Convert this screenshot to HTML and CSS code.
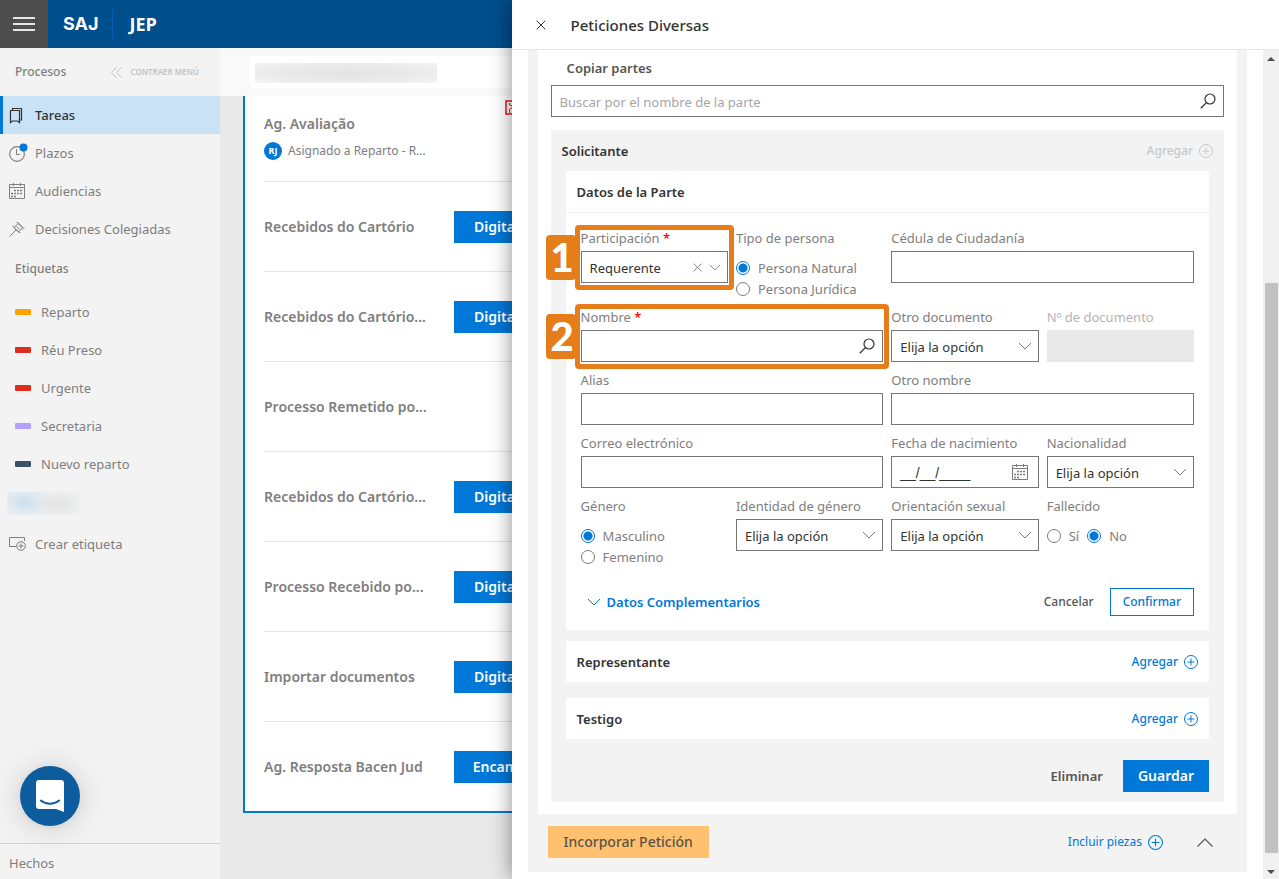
FILE: index.html
```html
<!DOCTYPE html>
<html lang="es">
<head>
<meta charset="utf-8">
<title>Peticiones Diversas</title>
<link rel="stylesheet" href="styles.css">
</head>
<body>
<svg class="sprite" aria-hidden="true">
  <symbol id="i-search" viewBox="0 0 16 16"><circle cx="10" cy="6" r="5" fill="none" stroke="currentColor" stroke-width="1.2"/><path d="M6.4 9.6L.8 15.2" fill="none" stroke="currentColor" stroke-width="1.3"/></symbol>
  <symbol id="i-plus" viewBox="0 0 14 14"><circle cx="7" cy="7" r="6.5" fill="none" stroke="currentColor"/><path d="M7 3.5v7M3.5 7h7" fill="none" stroke="currentColor"/></symbol>
  <symbol id="i-down" viewBox="0 0 14 8"><path d="M1 1l6 6 6-6" fill="none" stroke="currentColor"/></symbol>
  <symbol id="i-x" viewBox="0 0 10 10"><path d="M.7.7l8.6 8.6M9.3.7L.7 9.3" fill="none" stroke="currentColor"/></symbol>
  <symbol id="i-cal" viewBox="0 0 16 16"><path d="M.5 1.500h15v14H.5zM.5 4.500h15M4.500 0v3M11.500 0v3" fill="none" stroke="currentColor"/><path d="M5 7.500h9M2 10.500h12M2 13.500h6" fill="none" stroke="currentColor" stroke-width="1.500" stroke-dasharray="2 1"/></symbol>
</svg>
<div class="app">
  <header class="topbar">
    <button class="burger" type="button" aria-label="Menú"><span></span><span></span><span></span></button>
    <span class="brand">SAJ</span>
    <span class="org">JEP</span>
  </header>
  <nav class="sidebar">
    <div class="side-head">
      <span class="side-title">Procesos</span>
      <button class="collapse" type="button"><svg width="11" height="11" viewBox="0 0 11 11"><path d="M5.500.5l-5 5 5 5M10.500.5l-5 5 5 5" fill="none" stroke="currentColor"/></svg>CONTRAER MENÚ</button>
    </div>
    <a class="nav active" href="#"><svg width="17" height="17" viewBox="0 0 17 17"><path d="M1.500 3.500h9v12l-2-1.500h-5l-2 1.500zM3.500 3V1.500h9V13H11" fill="none" stroke="currentColor" stroke-width="1.200"/></svg>Tareas</a>
    <a class="nav" href="#"><svg width="20" height="20" viewBox="0 0 20 20"><circle cx="8" cy="11" r="7.400" fill="none" stroke="currentColor" stroke-width="1.100"/><path d="M7.500 6v5.500H11" fill="none" stroke="currentColor"/><circle cx="14.500" cy="4.500" r="4" fill="#0078d7"/></svg>Plazos</a>
    <a class="nav" href="#"><svg width="16" height="16"><use href="#i-cal"/></svg>Audiencias</a>
    <a class="nav" href="#"><svg width="16" height="16" viewBox="0 0 16 16"><path d="M.5 15.500L7 9M5 6.500l4-4 4.500 4.500-4 4zM4 5.500l6.500 6.500M8.500 1l6.500 6.500M4 5.500l1-1M8.500 1l-1 1M10.500 12l1-1M15 7.500l-1 1M7.500 5.500l3 3" fill="none" stroke="currentColor"/></svg>Decisiones Colegiadas</a>
    <div class="side-sub">Etiquetas</div>
    <a class="nav tag" href="#"><i class="sw orange"></i>Reparto</a>
    <a class="nav tag" href="#"><i class="sw red"></i>Réu Preso</a>
    <a class="nav tag" href="#"><i class="sw red"></i>Urgente</a>
    <a class="nav tag" href="#"><i class="sw lilac"></i>Secretaria</a>
    <a class="nav tag" href="#"><i class="sw slate"></i>Nuevo reparto</a>
    <div class="smudge-tag"></div>
    <a class="nav create" href="#"><svg width="17" height="14" viewBox="0 0 17 14"><path d="M7 9.500H.5V.5h15V4" fill="none" stroke="currentColor"/><circle cx="12" cy="9" r="4.300" fill="none" stroke="currentColor"/><path d="M12 6.500v5M9.500 9h5" fill="none" stroke="currentColor"/></svg>Crear etiqueta</a>
    <div class="side-foot">Hechos</div>
    <button class="chat" type="button" aria-label="Chat"><svg width="28" height="32" viewBox="0 0 28 32"><path d="M3 0h22a3 3 0 0 1 3 3v29l-8-3H3a3 3 0 0 1-3-3V3a3 3 0 0 1 3-3z" fill="#fff"/><path d="M4.800 20.500c5.500 4.300 12.900 4.300 18.400 0" fill="none" stroke="#0d5c9e" stroke-width="1.800" stroke-linecap="round"/></svg></button>
  </nav>
  <main class="board">
    <div class="filter"><div class="filter-box"><span class="smudge"></span></div></div>
    <div class="list">
      <article class="item first">
        <div><h3>Ag. Avaliação</h3><p class="assigned"><span class="avatar">RJ</span>Asignado a Reparto - R...</p></div>
        <svg class="flag" width="14" height="15" viewBox="0 0 14 15"><rect x="1" y="1" width="12" height="13" fill="#fff" stroke="#e11" stroke-width="1.500"/><path d="M5 13c-2-5 2-6 4-4M4.500 3v2l3 1" fill="none" stroke="#e11"/></svg>
      </article>
      <article class="item"><h3>Recebidos do Cartório</h3><button class="task" type="button">Digitalizar</button></article>
      <article class="item"><h3>Recebidos do Cartório...</h3><button class="task" type="button">Digitalizar</button></article>
      <article class="item"><h3>Processo Remetido po...</h3></article>
      <article class="item"><h3>Recebidos do Cartório...</h3><button class="task" type="button">Digitalizar</button></article>
      <article class="item"><h3>Processo Recebido po...</h3><button class="task" type="button">Digitalizar</button></article>
      <article class="item"><h3>Importar documentos</h3><button class="task" type="button">Digitalizar</button></article>
      <article class="item"><h3>Ag. Resposta Bacen Jud</h3><button class="task" type="button">Encaminar</button></article>
    </div>
  </main>
  <section class="drawer">
    <header class="drawer-head">
      <button class="plain" type="button" aria-label="Cerrar"><svg width="10" height="10"><use href="#i-x"/></svg></button>
      <h1>Peticiones Diversas</h1>
    </header>
    <div class="drawer-body">
      <div class="petition">
        <div class="parts">
          <label class="copy-label" for="buscar">Copiar partes</label>
          <div class="control"><input class="box" id="buscar" type="text" placeholder="Buscar por el nombre de la parte"><svg class="in-icon dark" width="16" height="16"><use href="#i-search"/></svg></div>
          <div class="group">
            <div class="group-head"><h2>Solicitante</h2><button class="add" type="button" disabled>Agregar<svg width="14" height="14"><use href="#i-plus"/></svg></button></div>
            <div class="card">
              <div class="card-head line"><h2>Datos de la Parte</h2></div>
              <form class="fields">
                <div class="field mark one">
                  <b class="badge">1</b>
                  <label for="part">Participación <em>*</em></label>
                  <div class="control"><select class="box" id="part"><option>Requerente</option></select><svg class="in-icon clear" width="9" height="9" viewBox="0 0 10 10"><use href="#i-x"/></svg><svg class="in-icon" width="12" height="7" viewBox="0 0 14 8"><use href="#i-down"/></svg></div>
                </div>
                <div class="field" role="radiogroup" aria-label="Tipo de persona">
                  <span class="label">Tipo de persona</span>
                  <div class="radios"><label><input type="radio" name="tipo" checked>Persona Natural</label><label><input type="radio" name="tipo">Persona Jurídica</label></div>
                </div>
                <div class="field wide"><label for="cedula">Cédula de Ciudadanía</label><input class="box" id="cedula" type="text"></div>
                <div class="field wide mark two">
                  <b class="badge">2</b>
                  <label for="nombre">Nombre <em>*</em></label>
                  <div class="control"><input class="box" id="nombre" type="text"><svg class="in-icon dark" width="16" height="16"><use href="#i-search"/></svg></div>
                </div>
                <div class="field"><label for="otrodoc">Otro documento</label><div class="control"><select class="box" id="otrodoc"><option>Elija la opción</option></select><svg class="in-icon" width="14" height="8"><use href="#i-down"/></svg></div></div>
                <div class="field off"><label for="numdoc">Nº de documento</label><input class="box" id="numdoc" type="text" disabled></div>
                <div class="field wide"><label for="alias">Alias</label><input class="box" id="alias" type="text"></div>
                <div class="field wide"><label for="otronom">Otro nombre</label><input class="box" id="otronom" type="text"></div>
                <div class="field wide"><label for="correo">Correo electrónico</label><input class="box" id="correo" type="text"></div>
                <div class="field"><label for="fecha">Fecha de nacimiento</label><div class="control"><input class="box date" id="fecha" type="text" value="__/__/____"><svg class="in-icon cal" width="16" height="16"><use href="#i-cal"/></svg></div></div>
                <div class="field"><label for="nac">Nacionalidad</label><div class="control"><select class="box" id="nac"><option>Elija la opción</option></select><svg class="in-icon" width="14" height="8"><use href="#i-down"/></svg></div></div>
                <div class="field" role="radiogroup" aria-label="Género">
                  <span class="label">Género</span>
                  <div class="radios"><label><input type="radio" name="genero" checked>Masculino</label><label><input type="radio" name="genero">Femenino</label></div>
                </div>
                <div class="field"><label for="ident">Identidad de género</label><div class="control"><select class="box" id="ident"><option>Elija la opción</option></select><svg class="in-icon" width="14" height="8"><use href="#i-down"/></svg></div></div>
                <div class="field"><label for="orient">Orientación sexual</label><div class="control"><select class="box" id="orient"><option>Elija la opción</option></select><svg class="in-icon" width="14" height="8"><use href="#i-down"/></svg></div></div>
                <div class="field" role="radiogroup" aria-label="Fallecido">
                  <span class="label">Fallecido</span>
                  <div class="radios row"><label><input type="radio" name="fallecido">Sí</label><label><input type="radio" name="fallecido" checked>No</label></div>
                </div>
              </form>
              <div class="card-actions">
                <button class="more" type="button"><svg width="14" height="8"><use href="#i-down"/></svg>Datos Complementarios</button>
                <button class="cancel" type="button">Cancelar</button>
                <button class="confirm" type="button">Confirmar</button>
              </div>
            </div>
            <div class="card"><div class="card-head"><h2>Representante</h2><button class="add" type="button">Agregar<svg width="14" height="14"><use href="#i-plus"/></svg></button></div></div>
            <div class="card last"><div class="card-head"><h2>Testigo</h2><button class="add" type="button">Agregar<svg width="14" height="14"><use href="#i-plus"/></svg></button></div></div>
            <div class="group-actions"><button class="delete" type="button">Eliminar</button><button class="save" type="button">Guardar</button></div>
          </div>
        </div>
        <footer class="petition-foot">
          <button class="incorporate" type="button">Incorporar Petición</button>
          <button class="include" type="button">Incluir piezas<svg width="15" height="15" viewBox="0 0 14 14"><use href="#i-plus"/></svg></button>
          <button class="plain fold" type="button" aria-label="Plegar"><svg width="16" height="9" viewBox="0 0 16 9"><path d="M.5 8.500L8 1l7.500 7.500" fill="none" stroke="currentColor" stroke-width="1.200"/></svg></button>
        </footer>
      </div>
      <div class="scrollbar" aria-hidden="true"><i class="up"></i><i class="thumb"></i><i class="down"></i></div>
    </div>
  </section>
</div>
</body>
</html>
```
FILE: styles.css
```css
* { box-sizing: border-box; }
body { margin: 0; font: 13px/20px "Noto Sans", "Open Sans", sans-serif; color: #7e7e7e; }
h1, h2, h3, p { margin: 0; font-size: inherit; font-weight: 600; }
button, input, select { font: inherit; color: inherit; }
button { margin: 0; padding: 0; border: 0; background: none; cursor: pointer; }
a { color: inherit; text-decoration: none; }
.sprite { display: none; }
svg { flex: none; }

.app { position: relative; display: grid; grid-template: 48px 1fr / 220px 1fr; height: 100vh; overflow: hidden; background: #e9e9e9; }
.topbar { grid-column: 1 / -1; display: flex; align-items: center; background: #004e8c; color: #fff; font-size: 18px; font-weight: 700; }
.burger { display: flex; flex-direction: column; justify-content: center; align-items: center; gap: 4px; width: 48px; height: 48px; background: #4d4d4d; }
.burger span { width: 22px; height: 2px; background: #e6e6e6; }
.brand { margin-left: 15px; padding-right: 14px; font-family: Inter, sans-serif; line-height: 30px; border-right: 1px solid #005fae; }
.org { margin-left: 16px; font-family: "Open Sans", sans-serif; }

.sidebar { position: relative; display: flex; flex-direction: column; min-height: 0; background: #f3f3f3; }
.side-head { display: flex; align-items: center; justify-content: space-between; height: 48px; padding: 0 21px 0 15px; }
.side-title, .side-sub { font-size: 12px; font-weight: 500; }
.collapse { display: flex; align-items: center; gap: 8px; color: #c2c2c2; font-size: 8px; font-weight: 600; }
.nav { display: grid; grid-template-columns: 26px 1fr; align-items: center; height: 38px; padding-left: 9px; line-height: 20px; }
.nav.active { padding-left: 6px; border-left: 3px solid #0078d7; background: #c9e2f6; color: #333; font-weight: 500; }
.side-sub { margin: 11px 15px 14px; line-height: 20px; }
.tag { padding-left: 15px; }
.sw { width: 16px; height: 6px; border-radius: 1px; }
.orange { background: #faa300; }
.red { background: #de2d1e; }
.lilac { background: #b49ffc; }
.slate { background: #3b5264; }
.smudge-tag { width: 72px; height: 23px; margin: 9px 0 10px 7px; background: radial-gradient(26px 18px at 17px 10px, #cbdfed, transparent), radial-gradient(30px 18px at 50px 12px, #e3e3e3, transparent), #f1f2f3; }
.side-foot { margin-top: auto; padding: 9px 9px 6px; border-top: 1px solid #d4d4d4; }
.chat { position: absolute; left: 20px; bottom: 53px; display: grid; place-items: center; width: 60px; height: 60px; border-radius: 50%; background: #0d5c9e; box-shadow: 0 1px 6px rgba(0,0,0,.06), 0 2px 32px rgba(0,0,0,.16); }

.board { min-width: 0; overflow: hidden; }
.filter { height: 48px; padding: 8px 0 8px 30px; background: #f9f9f9; }
.filter-box { height: 32px; padding: 7px 5px 5px; background: #fff; }
.smudge { display: block; width: 182px; height: 20px; background: radial-gradient(ellipse at 50% 50%, #e3e3e3 0, #ebebeb 60%, #f4f4f4 100%); }
.list { margin: 0 23px; padding: 0 19px; background: #fff; border: solid #0078d7; border-width: 0 2px 2px; }
.item { display: grid; grid-template-columns: 182px 110px; gap: 8px; align-items: center; height: 90px; border-bottom: 1px solid #e6e6e6; }
.item:last-child { height: 89px; border: 0; }
.item h3 { font-size: 14px; white-space: nowrap; }
.item.first { grid-template-columns: 233px 14px; align-items: start; height: 86px; padding-top: 18px; }
.assigned { display: flex; align-items: center; gap: 6px; margin-top: 7px; font-size: 12px; font-weight: 400; white-space: nowrap; }
.avatar { width: 18px; height: 18px; border-radius: 50%; background: #0078d7; color: #fff; font-size: 9px; font-weight: 700; line-height: 18px; text-align: center; }
.flag { margin-top: -14px; }
.task { height: 32px; background: #0078d7; color: #fff; font-size: 14px; font-weight: 600; }

.drawer { position: absolute; top: 0; right: 0; bottom: 0; left: 40%; display: flex; flex-direction: column; background: #fff; box-shadow: 0 0 20px rgba(0,0,0,.45); }
.drawer-head { display: flex; align-items: center; gap: 24px; height: 50px; padding-left: 24px; border-bottom: 1px solid #e6e6e6; color: #333; font-size: 15px; flex: none; }
.drawer-head h1 { font-weight: 500; }
.plain { display: grid; place-items: center; }
.drawer-head .plain { width: 11px; }
.drawer-body { flex: 1; min-height: 0; display: flex; overflow: hidden; }
.petition { flex: 1; align-self: flex-start; margin: 0 16px 7px; padding: 0 10px; background: #f3f3f3; }
.parts { padding: 8px 13px 12px; background: #fff; }
.copy-label { display: block; margin: 0 16px 7px; color: #555; font-weight: 600; }
.control { position: relative; display: grid; }
.box { display: block; width: 100%; height: 32px; padding: 2px 8px 0; border: 1px solid #767676; border-radius: 0; background: #fff; color: #333; appearance: none; outline: 0; }
.box::placeholder { color: #a6a6a6; opacity: 1; }
.date { font: 14px "Liberation Sans", Arial, sans-serif; }
.in-icon { position: absolute; right: 7px; top: 0; bottom: 0; margin: auto 0; pointer-events: none; color: #7b7b7b; }
.in-icon.dark { right: 8px; color: #333; }
.in-icon.clear { right: 26px; }
.in-icon.cal { right: 11px; }
.group { margin-top: 13px; padding: 0 15px 10px; background: #f3f3f3; color: #333; }
.group-head { display: flex; justify-content: space-between; align-items: center; height: 41px; margin: 0 -4px; }
.card { margin-bottom: 11px; background: #fff; }
.card + .card { margin-bottom: 16px; }
.card.card.last { margin-bottom: 21px; }
.card-head { display: flex; align-items: center; justify-content: space-between; height: 41px; padding: 0 11px; }
.card-head.line { height: 42px; border-bottom: 1px solid #f0f0f0; }
.add { display: flex; align-items: center; gap: 6px; color: #0078d7; font-size: 12px; font-weight: 500; }
.add:disabled { color: #c8c8c8; }

.fields { display: grid; grid-template-columns: repeat(4, minmax(0, 1fr)); gap: 8px; align-items: start; padding: 15px 15px 0; color: #7e7e7e; }
.field { position: relative; display: grid; gap: 3px; white-space: nowrap; }
.wide { grid-column: span 2; }
.field em { color: #e81123; font-style: normal; font-weight: 600; }
.off label { color: #b4b4b4; }
.box:disabled { background: #e9e9e9; border-color: #e9e9e9; }
.radios { display: grid; padding-top: 6px; }
.radios.row { display: flex; gap: 8px; }
.radios label { display: flex; align-items: center; gap: 8px; height: 21px; }
.radios input { flex: none; width: 14px; height: 14px; margin: 0; border: 1px solid #7b7b7b; border-radius: 50%; background: #fff; appearance: none; }
.radios input:checked { border-color: #0078d7; background: radial-gradient(circle, #0078d7 4px, #fff 5px); }
.mark::after { content: ""; position: absolute; inset: -3px -6px -7px; border: 5px solid #e57e1a; border-radius: 4px; pointer-events: none; }
.badge { position: absolute; left: -35px; top: 7px; width: 30px; height: 45px; padding-left: 3px; border-radius: 4px; background: #e57e1a; color: #fff; font: 900 40px/45px Lato, sans-serif; text-align: center; }

.card-actions { display: flex; align-items: center; margin-top: 21px; padding: 0 15px 14px; }
.more { display: flex; align-items: center; gap: 6px; margin: 0 auto 0 6px; color: #0078d7; font-weight: 600; }
.cancel { margin-right: 16px; color: #555; font-size: 12px; font-weight: 500; }
.confirm { height: 28px; padding: 0 12px; border: 1px solid #0078d7; color: #0078d7; font-size: 12px; font-weight: 500; }
.group-actions { display: flex; justify-content: flex-end; gap: 20px; }
.delete { color: #555; font-weight: 600; }
.save { height: 32px; padding: 0 15px; background: #0078d7; color: #fff; font-size: 14px; font-weight: 600; }
.petition-foot { display: flex; align-items: center; padding: 12px 24px 14px 10px; }
.incorporate { height: 32px; margin-right: auto; padding: 0 16px; background: #ffc170; color: #5c5346; font-size: 14px; font-weight: 500; }
.include { display: flex; align-items: center; gap: 6px; margin-right: 34px; color: #0078d7; font-size: 12px; }
.fold { color: #555; }

.scrollbar { display: flex; flex-direction: column; align-items: center; width: 16px; background: #f0f0f0; }
.up, .down { border: 4px solid transparent; }
.up { margin: 3px 0 0; border-bottom-color: #4d4d4d; }
.down { margin: 17px 0 1px; border-top-color: #4d4d4d; }
.thumb { width: 13px; margin-top: auto; height: calc(69% - 2px); background: #c1c1c1; }
```
